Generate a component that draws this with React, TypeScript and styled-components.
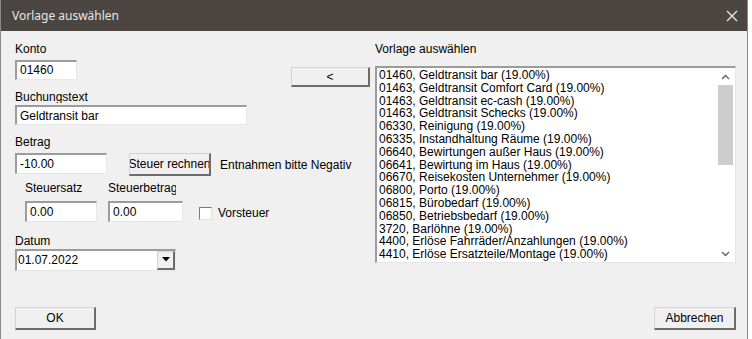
import styled, { createGlobalStyle } from "styled-components";

const GlobalStyle = createGlobalStyle`
  html, body {
    margin: 0;
    padding: 0;
    background: #ffffff;
  }
  body {
    font-family: "Liberation Sans", Arial, sans-serif;
    font-size: 12px;
    color: #000;
  }
`;

const templates = [
  "01460, Geldtransit bar (19.00%)",
  "01463, Geldtransit Comfort Card (19.00%)",
  "01463, Geldtransit ec-cash (19.00%)",
  "01463, Geldtransit Schecks (19.00%)",
  "06330, Reinigung (19.00%)",
  "06335, Instandhaltung Räume (19.00%)",
  "06640, Bewirtungen außer Haus (19.00%)",
  "06641, Bewirtung im Haus (19.00%)",
  "06670, Reisekosten Unternehmer (19.00%)",
  "06800, Porto (19.00%)",
  "06815, Bürobedarf (19.00%)",
  "06850, Betriebsbedarf (19.00%)",
  "3720, Barlöhne (19.00%)",
  "4400, Erlöse Fahrräder/Anzahlungen (19.00%)",
  "4410, Erlöse Ersatzteile/Montage (19.00%)",
  "4735, gewährte Skonti (19.00%)",
];

const Window = styled.div`
  width: 748px;
  height: 339px;
  box-sizing: border-box;
  background: #f0f0f0;
  border-left: 1px solid #8a8a8a;
  border-right: 1px solid #8a8a8a;
  display: flex;
  flex-direction: column;
  overflow: hidden;
`;

const TitleBar = styled.div`
  height: 31px;
  flex: none;
  background: #4b4642;
  display: flex;
  align-items: center;
  justify-content: space-between;
  padding: 0 9px 0 11px;
  font-family: "Noto Sans", "Open Sans", sans-serif;
  font-size: 12px;
  color: #e6e6e6;
`;

const CloseIcon = () => (
  <svg width="12" height="12" viewBox="0 0 12 12">
    <path d="M1 1 L11 11 M11 1 L1 11" stroke="#e8e8e8" strokeWidth="1.3" fill="none" />
  </svg>
);

const Main = styled.div`
  display: flex;
  height: 240px;
  padding-left: 14px;
`;

const LeftPane = styled.div`
  width: 276px;
  display: flex;
  flex-direction: column;
`;

const MidPane = styled.div`
  width: 79px;
  padding-top: 36px;
`;

const RightPane = styled.div`
  margin-left: 5px;
  width: 361px;
  display: flex;
  flex-direction: column;
`;

const Label = styled.div<{ $top: number; $width?: number }>`
  margin-top: ${(p) => p.$top}px;
  height: 14px;
  line-height: 14px;
  white-space: nowrap;
  overflow: hidden;
  width: ${(p) => (p.$width ? `${p.$width}px` : "auto")};
`;

const TextBox = styled.div<{ $width: number; $height?: number; $top?: number }>`
  box-sizing: border-box;
  width: ${(p) => p.$width}px;
  height: ${(p) => p.$height ?? 21}px;
  margin-top: ${(p) => p.$top ?? 0}px;
  background: #fff;
  border-style: solid;
  border-width: 2px 1px 1px 2px;
  border-color: #9c9c9c #e6e6e6 #e6e6e6 #9c9c9c;
  padding: 0 3px;
  display: flex;
  align-items: center;
  white-space: nowrap;
  flex: none;
`;

const Button = styled.div<{ $width: number; $height: number }>`
  box-sizing: border-box;
  width: ${(p) => p.$width}px;
  height: ${(p) => p.$height}px;
  background: #f0f0f0;
  border-style: solid;
  border-width: 1px 2px 2px 1px;
  border-color: #d4d4d4 #6d6d6d #6d6d6d #d4d4d4;
  display: flex;
  align-items: center;
  justify-content: center;
  overflow: hidden;
  white-space: nowrap;
  flex: none;
`;

const Row = styled.div<{ $top: number; $gap: number }>`
  display: flex;
  align-items: flex-start;
  margin-top: ${(p) => p.$top}px;
  gap: ${(p) => p.$gap}px;
`;

const Hint = styled.div`
  margin-top: 5px;
  white-space: nowrap;
`;

const TaxGroup = styled.div`
  display: flex;
  margin-left: 10px;
  margin-top: 5px;
`;

const TaxColumn = styled.div<{ $width: number }>`
  display: flex;
  flex-direction: column;
  width: ${(p) => p.$width}px;
  flex: none;
`;

const CheckRow = styled.label`
  display: flex;
  align-items: center;
  gap: 6px;
  margin-top: 24px;
  margin-left: 2px;
`;

const CheckBox = styled.span`
  box-sizing: border-box;
  width: 13px;
  height: 13px;
  background: #fff;
  border-style: solid;
  border-width: 1px;
  border-color: #7a7a7a #e0e0e0 #e0e0e0 #7a7a7a;
`;

const Combo = styled.div`
  box-sizing: border-box;
  width: 161px;
  height: 23px;
  margin-top: 1px;
  background: #fff;
  border-style: solid;
  border-width: 2px 1px 1px 2px;
  border-color: #9c9c9c #e6e6e6 #e6e6e6 #9c9c9c;
  display: flex;
  align-items: stretch;
`;

const ComboText = styled.div`
  flex: 1;
  display: flex;
  align-items: center;
  padding-left: 1px;
`;

const ComboArrow = styled.div`
  box-sizing: border-box;
  width: 18px;
  background: #f0f0f0;
  border-style: solid;
  border-width: 1px 2px 2px 1px;
  border-color: #d4d4d4 #6d6d6d #6d6d6d #d4d4d4;
  display: flex;
  align-items: center;
  justify-content: center;
`;

const ListBox = styled.div`
  box-sizing: border-box;
  margin-top: 10px;
  width: 361px;
  height: 197px;
  background: #fff;
  border-style: solid;
  border-width: 2px 1px 1px 2px;
  border-color: #9c9c9c #e6e6e6 #e6e6e6 #9c9c9c;
  display: flex;
`;

const ListItems = styled.div`
  flex: 1;
  overflow: hidden;
  padding: 1px 0 0 2px;
`;

const ListItem = styled.div`
  height: 12.8px;
  line-height: 13px;
  white-space: nowrap;
`;

const ScrollBar = styled.div`
  width: 17px;
  flex: none;
  display: flex;
  flex-direction: column;
  background: #fff;
  margin-right: 1px;
`;

const ScrollArrow = styled.div`
  height: 17px;
  display: flex;
  align-items: center;
  justify-content: center;
  flex: none;
`;

const ScrollTrack = styled.div`
  flex: 1;
  padding: 0 1px;
`;

const ScrollThumb = styled.div`
  height: 80px;
  background: #cdcdcd;
`;

const Footer = styled.div`
  display: flex;
  justify-content: space-between;
  margin-top: 36px;
  padding: 0 11px 0 14px;
`;

const Chevron = ({ up }: { up?: boolean }) => (
  <svg width="9" height="6" viewBox="0 0 9 6">
    <path
      d={up ? "M1 5 L4.5 1.5 L8 5" : "M1 1 L4.5 4.5 L8 1"}
      stroke="#606060"
      strokeWidth="1.4"
      fill="none"
    />
  </svg>
);

export default function App() {
  return (
    <>
      <GlobalStyle />
      <Window>
        <TitleBar>
          <span>Vorlage auswählen</span>
          <CloseIcon />
        </TitleBar>
        <Main>
          <LeftPane>
            <Label $top={11}>Konto</Label>
            <TextBox $width={62} $height={20} $top={4}>01460</TextBox>
            <Label $top={10}>Buchungstext</Label>
            <TextBox $width={232} $height={20} $top={2}>Geldtransit bar</TextBox>
            <Label $top={10}>Betrag</Label>
            <Row $top={4} $gap={22}>
              <TextBox $width={92}>-10.00</TextBox>
              <Row $top={0} $gap={9}>
                <Button $width={82} $height={23}>Steuer rechnen</Button>
                <Hint>Entnahmen bitte Negativ</Hint>
              </Row>
            </Row>
            <TaxGroup>
              <TaxColumn $width={83}>
                <Label $top={0} $width={58}>Steuersatz</Label>
                <TextBox $width={72} $top={6}>0.00</TextBox>
              </TaxColumn>
              <TaxColumn $width={89}>
                <Label $top={0} $width={68}>Steuerbetrag</Label>
                <TextBox $width={75} $top={6}>0.00</TextBox>
              </TaxColumn>
              <CheckRow>
                <CheckBox />
                Vorsteuer
              </CheckRow>
            </TaxGroup>
            <Label $top={12}>Datum</Label>
            <Combo>
              <ComboText>01.07.2022</ComboText>
              <ComboArrow>
                <svg width="8" height="5" viewBox="0 0 8 5">
                  <path d="M0 0 H8 L4 4.5 Z" fill="#000" />
                </svg>
              </ComboArrow>
            </Combo>
          </LeftPane>
          <MidPane>
            <Button $width={79} $height={20}>&lt;</Button>
          </MidPane>
          <RightPane>
            <Label $top={11}>Vorlage auswählen</Label>
            <ListBox>
              <ListItems>
                {templates.map((t, i) => (
                  <ListItem key={i}>{t}</ListItem>
                ))}
              </ListItems>
              <ScrollBar>
                <ScrollArrow>
                  <Chevron up />
                </ScrollArrow>
                <ScrollTrack>
                  <ScrollThumb />
                </ScrollTrack>
                <ScrollArrow>
                  <Chevron />
                </ScrollArrow>
              </ScrollBar>
            </ListBox>
          </RightPane>
        </Main>
        <Footer>
          <Button $width={81} $height={23}>OK</Button>
          <Button $width={82} $height={23}>Abbrechen</Button>
        </Footer>
      </Window>
    </>
  );
}
